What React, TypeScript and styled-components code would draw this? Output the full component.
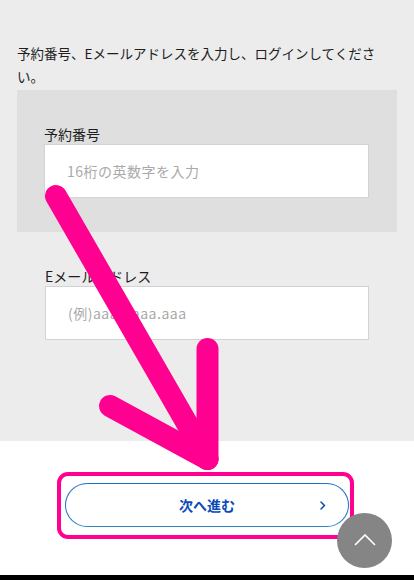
import styled, { createGlobalStyle } from "styled-components";

const GlobalStyle = createGlobalStyle`
  html, body {
    margin: 0;
    padding: 0;
    background: #000;
  }
  body {
    font-family: "Noto Sans CJK JP", "Noto Sans", sans-serif;
    -webkit-font-smoothing: antialiased;
  }
`;

const App = () => {
  return (
    <>
      <GlobalStyle />
      <Page>
        <FormSection>
          <Lead>予約番号、Eメールアドレスを入力し、ログインしてください。</Lead>
          <ReserveBox>
            <Label htmlFor="reserve">予約番号</Label>
            <Input id="reserve" type="text" placeholder="16桁の英数字を入力" />
          </ReserveBox>
          <MailField>
            <Label htmlFor="mail">Eメールアドレス</Label>
            <Input id="mail" type="email" placeholder="(例)aaa@aaa.aaa" />
          </MailField>
        </FormSection>
        <Footer>
          <NextButton type="button">
            <span />
            <ButtonText>次へ進む</ButtonText>
            <Chevron width="6" height="9" viewBox="0 0 6 9">
              <polyline points="1,1 4.5,4.5 1,8" />
            </Chevron>
          </NextButton>
        </Footer>
        <BottomBar />

        {/* annotation drawn over the screen */}
        <Annotation width="414" height="580" viewBox="0 0 414 580">
          <rect x="59" y="474" width="293" height="63" rx="9" />
          <line x1="56" y1="196" x2="207.5" y2="459" />
          <line x1="207.5" y1="349" x2="207.5" y2="459" />
          <line x1="110" y1="406" x2="207.5" y2="459" />
        </Annotation>

        <ToTop type="button" aria-label="ページトップへ">
          <svg width="22" height="13" viewBox="0 0 22 13">
            <polyline points="1,12 11,2 21,12" />
          </svg>
        </ToTop>
      </Page>
    </>
  );
};

const Page = styled.div`
  position: relative;
  width: 414px;
  height: 580px;
  overflow: hidden;
  background: #fff;
`;

const FormSection = styled.section`
  background: #ececec;
  padding: 42px 17px 100px;
  height: 441px;
  box-sizing: border-box;
`;

const Lead = styled.p`
  margin: 0 0 2px;
  padding-right: 14px;
  font-size: 13.5px;
  line-height: 23px;
  color: #1e1e1e;
`;

const ReserveBox = styled.div`
  background: #dfdfdf;
  padding: 34px 28px 34px 27px;
  display: flex;
  flex-direction: column;
`;

const MailField = styled.div`
  padding: 34px 28px 0 28px;
  display: flex;
  flex-direction: column;
`;

const Label = styled.label`
  font-size: 14px;
  line-height: 20px;
  color: #1e1e1e;
`;

const Input = styled.input`
  box-sizing: border-box;
  width: 100%;
  height: 54px;
  margin: 0;
  padding: 0 22px;
  border: 1px solid #d3d3d3;
  border-radius: 0;
  background: #fff;
  font-family: "Noto Sans CJK JP", "Noto Sans", sans-serif;
  font-size: 14px;
  letter-spacing: 0.5px;
  color: #333;
  outline: none;
  &::placeholder {
    color: #a9a9a9;
  }
`;

const Footer = styled.div`
  height: 134px;
  box-sizing: border-box;
  padding-top: 42px;
  display: flex;
  justify-content: center;
  align-items: flex-start;
  background: #fff;
`;

const NextButton = styled.button`
  width: 284px;
  height: 44px;
  padding: 0 22px;
  display: grid;
  grid-template-columns: 1fr auto 1fr;
  align-items: center;
  background: #fff;
  border: 1px solid #1f72c6;
  border-bottom-color: #2a86c4;
  border-radius: 22px;
  cursor: pointer;
`;

const ButtonText = styled.span`
  font-family: "Noto Sans CJK JP", "Noto Sans", sans-serif;
  font-size: 14px;
  font-weight: 700;
  color: #0c4bb9;
`;

const Chevron = styled.svg`
  justify-self: end;
  fill: none;
  stroke: #0c4bb9;
  stroke-width: 1.5;
  stroke-linecap: round;
  stroke-linejoin: round;
`;

const BottomBar = styled.div`
  height: 5px;
  background: #000;
`;

const Annotation = styled.svg`
  position: absolute;
  top: 0;
  left: 0;
  pointer-events: none;
  fill: none;
  stroke: #ff0090;
  stroke-linecap: round;

  rect {
    stroke-width: 4;
  }
  line {
    stroke-width: 22;
  }
`;

const ToTop = styled.button`
  position: absolute;
  right: 22px;
  bottom: 12px;
  width: 55px;
  height: 55px;
  padding: 0;
  border: none;
  border-radius: 50%;
  background: #858585;
  display: flex;
  align-items: center;
  justify-content: center;

  svg {
    fill: none;
    stroke: #fff;
    stroke-width: 1.6;
    margin-top: -2px;
  }
`;

export default App;
